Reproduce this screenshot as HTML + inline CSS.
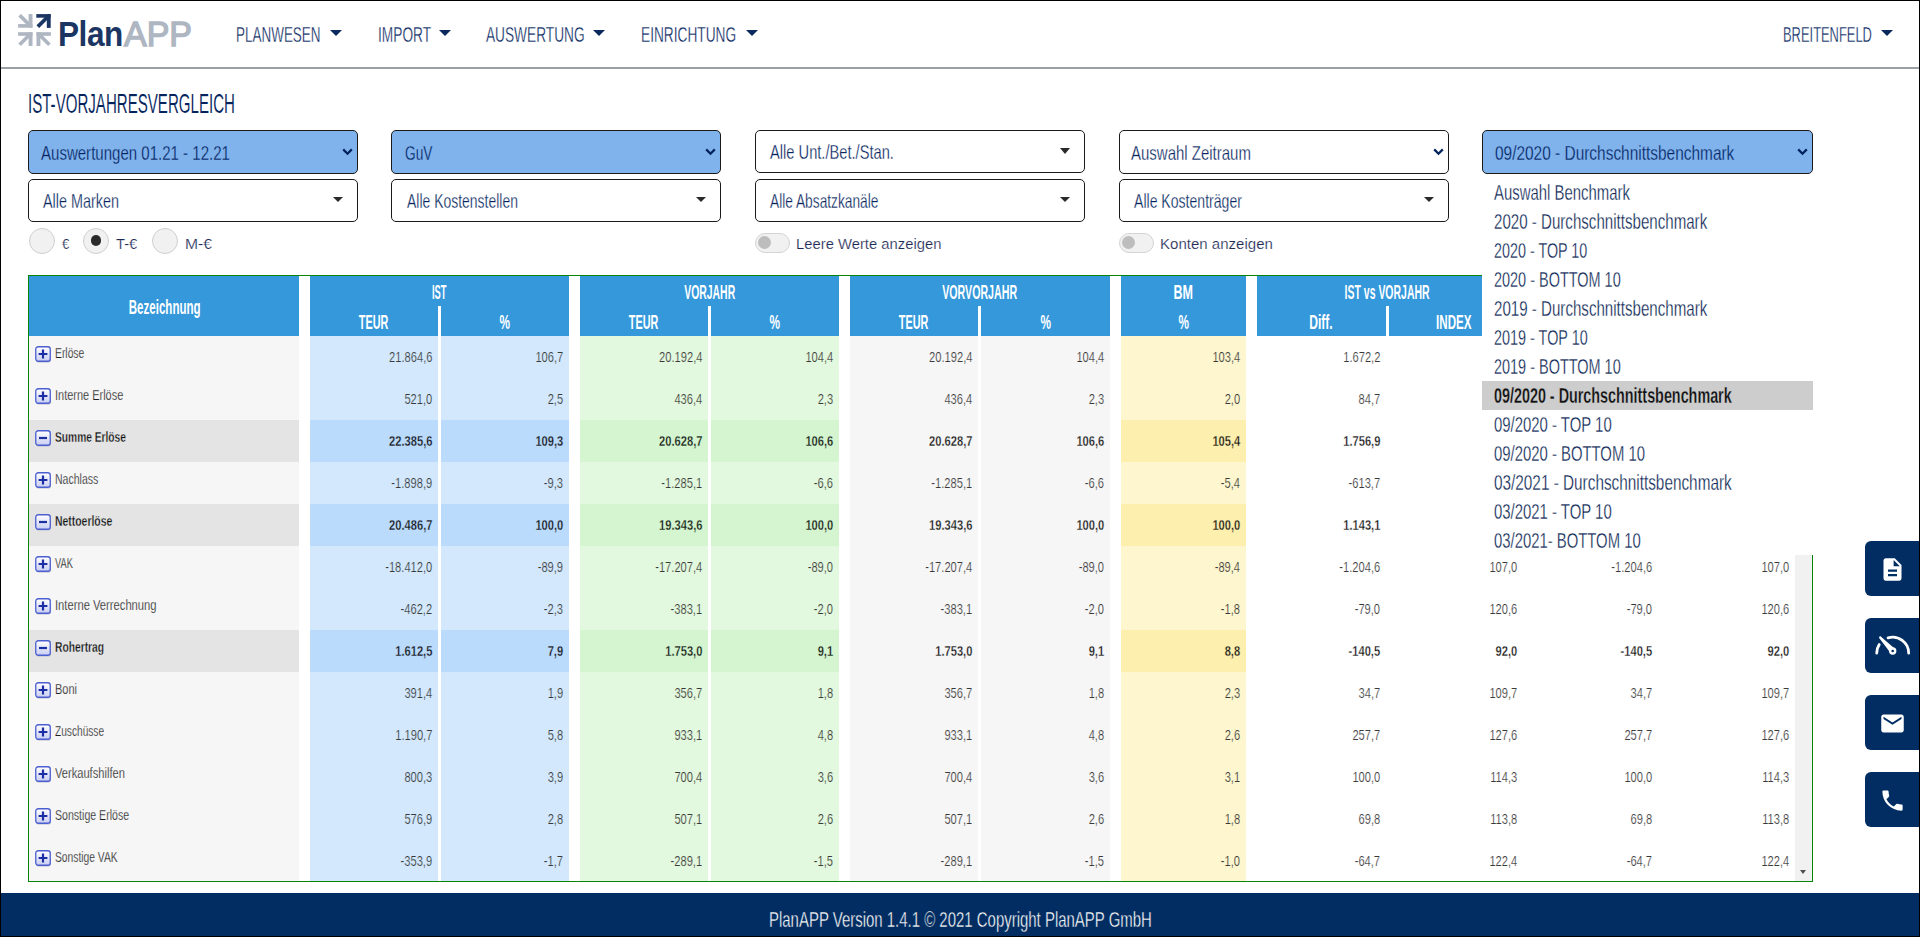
<!DOCTYPE html>
<html lang="de"><head><meta charset="utf-8"><title>PlanAPP - IST-Vorjahresvergleich</title>
<style>
html,body{margin:0;padding:0;background:#fff}
body{width:1920px;height:937px;position:relative;overflow:hidden;font-family:"Liberation Sans",sans-serif}
.b{position:absolute;box-sizing:content-box}
.t{position:absolute;white-space:nowrap;line-height:1;display:block}
</style></head><body>
<svg width="0" height="0" style="position:absolute"><defs><linearGradient id="g1" x1="0" y1="0" x2="0" y2="1">
<stop offset="0" stop-color="#ffffff"/><stop offset="1" stop-color="#c9cdf2"/></linearGradient></defs></svg>
<div class="b" style="left:0px;top:67px;width:1920px;height:2px;background:#9c9ea6;"></div>
<svg class="b" style="left:18px;top:14px" width="34" height="33" viewBox="0 0 34 33"><g fill="#aeb6c1" stroke="#aeb6c1"><g transform="translate(0.1,13.7) scale(1,-1)"><rect x="0" y="0" width="14.4" height="3.6" stroke="none"/><rect x="10.5" y="0" width="3.9" height="13.8" stroke="none"/><path d="M1.5 12.5 L12 2.1" stroke-width="3.7" fill="none"/></g><g transform="translate(0.1,18.2)"><rect x="0" y="0" width="14.4" height="3.6" stroke="none"/><rect x="10.5" y="0" width="3.9" height="13.8" stroke="none"/><path d="M1.5 12.5 L12 2.1" stroke-width="3.7" fill="none"/></g><g transform="translate(32.9,18.2) scale(-1,1)"><rect x="0" y="0" width="14.4" height="3.6" stroke="none"/><rect x="10.5" y="0" width="3.9" height="13.8" stroke="none"/><path d="M1.5 12.5 L12 2.1" stroke-width="3.7" fill="none"/></g></g><g transform="translate(18.3,0.1)" fill="#1c3664" stroke="#1c3664"><rect x="0" y="0" width="14.4" height="3.6" stroke="none"/><rect x="10.5" y="0" width="3.9" height="13.8" stroke="none"/><path d="M1.5 12.5 L12 2.1" stroke-width="3.7" fill="none"/></g></svg>
<span class="t" style="top:17.20px;font-size:35.8px;color:#1c3664;font-weight:700;letter-spacing:-0.5px;left:58.30px;transform-origin:0 0;transform:scaleX(0.8818);">Plan</span>
<span class="t" style="top:17.20px;font-size:35.8px;color:#aeb6c1;left:124.20px;transform-origin:0 0;transform:scaleX(0.9492);-webkit-text-stroke:1.4px #aeb6c1;">APP</span>
<span class="t" style="top:24.13px;font-size:21.7px;color:#03235c;left:236.00px;transform-origin:0 0;transform:scaleX(0.6209);-webkit-text-stroke:0.35px #fff;">PLANWESEN</span>
<div class="b" style="left:330.4px;top:29.8px;width:0;height:0;border-left:6.4px solid transparent;border-right:6.4px solid transparent;border-top:6.6px solid #0a2a5e"></div>
<span class="t" style="top:24.13px;font-size:21.7px;color:#03235c;left:377.50px;transform-origin:0 0;transform:scaleX(0.6322);-webkit-text-stroke:0.35px #fff;">IMPORT</span>
<div class="b" style="left:439px;top:29.8px;width:0;height:0;border-left:6.4px solid transparent;border-right:6.4px solid transparent;border-top:6.6px solid #0a2a5e"></div>
<span class="t" style="top:24.13px;font-size:21.7px;color:#03235c;left:486.00px;transform-origin:0 0;transform:scaleX(0.6307);-webkit-text-stroke:0.35px #fff;">AUSWERTUNG</span>
<div class="b" style="left:593.2px;top:29.8px;width:0;height:0;border-left:6.4px solid transparent;border-right:6.4px solid transparent;border-top:6.6px solid #0a2a5e"></div>
<span class="t" style="top:24.13px;font-size:21.7px;color:#03235c;left:641.00px;transform-origin:0 0;transform:scaleX(0.6317);-webkit-text-stroke:0.35px #fff;">EINRICHTUNG</span>
<div class="b" style="left:745.6px;top:29.8px;width:0;height:0;border-left:6.4px solid transparent;border-right:6.4px solid transparent;border-top:6.6px solid #0a2a5e"></div>
<span class="t" style="top:24.13px;font-size:21.7px;color:#03235c;left:1782.50px;transform-origin:0 0;transform:scaleX(0.5952);-webkit-text-stroke:0.35px #fff;">BREITENFELD</span>
<div class="b" style="left:1881.2px;top:29.8px;width:0;height:0;border-left:6.4px solid transparent;border-right:6.4px solid transparent;border-top:6.6px solid #0a2a5e"></div>
<span class="t" style="top:89.88px;font-size:27.2px;color:#03235c;left:28.00px;transform-origin:0 0;transform:scaleX(0.5545);-webkit-text-stroke:0.12px #fff;">IST-VORJAHRESVERGLEICH</span>
<div class="b" style="left:28px;top:130px;width:328px;height:42px;background:#80b3ec;border:1px solid #1a1a1a;border-radius:5px;"></div>
<span class="t" style="top:143.30px;font-size:20.2px;color:#03235c;left:40.50px;transform-origin:0 0;transform:scaleX(0.7447);-webkit-text-stroke:0.3px #80b3ec;">Auswertungen 01.21 - 12.21</span>
<svg class="b" style="left:341.5px;top:148px" width="11" height="8" viewBox="0 0 11 8"><path d="M1.2 1.4 L5.5 5.7 L9.8 1.4" fill="none" stroke="#03235c" stroke-width="2.3"/></svg>
<div class="b" style="left:391px;top:130px;width:328px;height:42px;background:#80b3ec;border:1px solid #1a1a1a;border-radius:5px;"></div>
<span class="t" style="top:143.30px;font-size:20.2px;color:#03235c;left:404.50px;transform-origin:0 0;transform:scaleX(0.6804);-webkit-text-stroke:0.3px #80b3ec;">GuV</span>
<svg class="b" style="left:704.5px;top:148px" width="11" height="8" viewBox="0 0 11 8"><path d="M1.2 1.4 L5.5 5.7 L9.8 1.4" fill="none" stroke="#03235c" stroke-width="2.3"/></svg>
<div class="b" style="left:755px;top:130px;width:328px;height:41px;background:#fff;border:1px solid #1a1a1a;border-radius:5px;"></div>
<span class="t" style="top:141.50px;font-size:20.2px;color:#03235c;left:770.00px;transform-origin:0 0;transform:scaleX(0.7266);-webkit-text-stroke:0.3px #fff;">Alle Unt./Bet./Stan.</span>
<div class="b" style="left:1059.5px;top:147.8px;width:0;height:0;border-left:5.9px solid transparent;border-right:5.9px solid transparent;border-top:6.3px solid #2a2a2a"></div>
<div class="b" style="left:1119px;top:130px;width:328px;height:42px;background:#fff;border:1px solid #1a1a1a;border-radius:5px;"></div>
<span class="t" style="top:143.30px;font-size:20.2px;color:#03235c;left:1131.00px;transform-origin:0 0;transform:scaleX(0.7423);-webkit-text-stroke:0.3px #fff;">Auswahl Zeitraum</span>
<svg class="b" style="left:1432.5px;top:148px" width="11" height="8" viewBox="0 0 11 8"><path d="M1.2 1.4 L5.5 5.7 L9.8 1.4" fill="none" stroke="#03235c" stroke-width="2.3"/></svg>
<div class="b" style="left:1482px;top:130px;width:329px;height:42px;background:#80b3ec;border:1px solid #1a1a1a;border-radius:5px;"></div>
<span class="t" style="top:143.30px;font-size:20.2px;color:#03235c;left:1495.00px;transform-origin:0 0;transform:scaleX(0.7645);-webkit-text-stroke:0.3px #80b3ec;">09/2020 - Durchschnittsbenchmark</span>
<svg class="b" style="left:1796.5px;top:148px" width="11" height="8" viewBox="0 0 11 8"><path d="M1.2 1.4 L5.5 5.7 L9.8 1.4" fill="none" stroke="#03235c" stroke-width="2.3"/></svg>
<div class="b" style="left:28px;top:179px;width:328px;height:41px;background:#fff;border:1px solid #1a1a1a;border-radius:5px;"></div>
<span class="t" style="top:191.10px;font-size:20.2px;color:#03235c;left:42.50px;transform-origin:0 0;transform:scaleX(0.7126);-webkit-text-stroke:0.3px #fff;">Alle Marken</span>
<div class="b" style="left:333px;top:197px;width:0;height:0;border-left:5.9px solid transparent;border-right:5.9px solid transparent;border-top:5.7px solid #2a2a2a"></div>
<div class="b" style="left:391px;top:179px;width:328px;height:41px;background:#fff;border:1px solid #1a1a1a;border-radius:5px;"></div>
<span class="t" style="top:191.10px;font-size:20.2px;color:#03235c;left:406.50px;transform-origin:0 0;transform:scaleX(0.6913);-webkit-text-stroke:0.3px #fff;">Alle Kostenstellen</span>
<div class="b" style="left:696px;top:197px;width:0;height:0;border-left:5.9px solid transparent;border-right:5.9px solid transparent;border-top:5.7px solid #2a2a2a"></div>
<div class="b" style="left:755px;top:179px;width:328px;height:41px;background:#fff;border:1px solid #1a1a1a;border-radius:5px;"></div>
<span class="t" style="top:191.10px;font-size:20.2px;color:#03235c;left:770.00px;transform-origin:0 0;transform:scaleX(0.6804);-webkit-text-stroke:0.3px #fff;">Alle Absatzkanäle</span>
<div class="b" style="left:1060px;top:197px;width:0;height:0;border-left:5.9px solid transparent;border-right:5.9px solid transparent;border-top:5.7px solid #2a2a2a"></div>
<div class="b" style="left:1119px;top:179px;width:328px;height:41px;background:#fff;border:1px solid #1a1a1a;border-radius:5px;"></div>
<span class="t" style="top:191.10px;font-size:20.2px;color:#03235c;left:1133.50px;transform-origin:0 0;transform:scaleX(0.6970);-webkit-text-stroke:0.3px #fff;">Alle Kostenträger</span>
<div class="b" style="left:1424px;top:197px;width:0;height:0;border-left:5.9px solid transparent;border-right:5.9px solid transparent;border-top:5.7px solid #2a2a2a"></div>
<div class="b" style="left:29px;top:228px;width:24px;height:24px;background:#f1f1f1;border:1px solid #cfcfcf;border-radius:50%;"></div>
<div class="b" style="left:83px;top:228px;width:24px;height:24px;background:#f1f1f1;border:1px solid #cfcfcf;border-radius:50%;"></div>
<div class="b" style="left:152px;top:228px;width:24px;height:24px;background:#f1f1f1;border:1px solid #cfcfcf;border-radius:50%;"></div>
<div class="b" style="left:90.7px;top:235.4px;width:10.6px;height:10.6px;background:#2b2b2b;border-radius:50%;"></div>
<span class="t" style="top:235.93px;font-size:15.2px;color:#1d2a55;left:61.50px;transform-origin:0 0;transform:scaleX(0.8635);-webkit-text-stroke:0.2px #fff;">€</span>
<span class="t" style="top:235.93px;font-size:15.2px;color:#1d2a55;left:115.60px;transform-origin:0 0;transform:scaleX(0.9699);-webkit-text-stroke:0.2px #fff;">T-€</span>
<span class="t" style="top:235.93px;font-size:15.2px;color:#1d2a55;left:184.80px;transform-origin:0 0;transform:scaleX(1.0314);-webkit-text-stroke:0.2px #fff;">M-€</span>
<div class="b" style="left:755px;top:233px;width:33px;height:18px;background:#f1f1f1;border:1px solid #d4d4d4;border-radius:10px;"></div>
<div class="b" style="left:758px;top:236px;width:13px;height:13px;background:#bdbdbd;border-radius:50%;"></div>
<span class="t" style="top:235.83px;font-size:15.2px;color:#1d2a55;left:796.00px;transform-origin:0 0;transform:scaleX(0.9746);-webkit-text-stroke:0.2px #fff;">Leere Werte anzeigen</span>
<div class="b" style="left:1119px;top:233px;width:33px;height:18px;background:#f1f1f1;border:1px solid #d4d4d4;border-radius:10px;"></div>
<div class="b" style="left:1122px;top:236px;width:13px;height:13px;background:#bdbdbd;border-radius:50%;"></div>
<span class="t" style="top:235.83px;font-size:15.2px;color:#1d2a55;left:1159.50px;transform-origin:0 0;transform:scaleX(0.9904);-webkit-text-stroke:0.2px #fff;">Konten anzeigen</span>
<div class="b" style="left:28px;top:275px;width:1783px;height:605px;border:1px solid #078407;"></div>
<div class="b" style="left:29px;top:276px;width:270px;height:60px;background:#3498db;"></div>
<span class="t" style="top:298.29px;font-size:19.5px;color:#fff;font-weight:700;left:103.63px;transform-origin:50% 0;transform:scaleX(0.5917);">Bezeichnung</span>
<div class="b" style="left:29px;top:336px;width:270px;height:545px;background:#f6f6f6;"></div>
<div class="b" style="left:29px;top:420px;width:270px;height:42px;background:#e4e4e4;"></div>
<div class="b" style="left:29px;top:504px;width:270px;height:42px;background:#e4e4e4;"></div>
<div class="b" style="left:29px;top:630px;width:270px;height:42px;background:#e4e4e4;"></div>
<div class="b" style="left:310px;top:276px;width:128px;height:60px;background:#3498db;"></div>
<div class="b" style="left:441px;top:276px;width:128px;height:60px;background:#3498db;"></div>
<div class="b" style="left:438px;top:276px;width:3px;height:30px;background:#3498db;"></div>
<div class="b" style="left:310px;top:336px;width:128px;height:545px;background:#d3e8fd;"></div>
<div class="b" style="left:310px;top:420px;width:128px;height:42px;background:#badbfc;"></div>
<div class="b" style="left:310px;top:504px;width:128px;height:42px;background:#badbfc;"></div>
<div class="b" style="left:310px;top:630px;width:128px;height:42px;background:#badbfc;"></div>
<div class="b" style="left:441px;top:336px;width:128px;height:545px;background:#d3e8fd;"></div>
<div class="b" style="left:441px;top:420px;width:128px;height:42px;background:#badbfc;"></div>
<div class="b" style="left:441px;top:504px;width:128px;height:42px;background:#badbfc;"></div>
<div class="b" style="left:441px;top:630px;width:128px;height:42px;background:#badbfc;"></div>
<span class="t" style="top:283.09px;font-size:19.5px;color:#fff;font-weight:700;left:424.33px;transform-origin:50% 0;transform:scaleX(0.4780);">IST</span>
<span class="t" style="top:312.99px;font-size:19.5px;color:#fff;font-weight:700;left:347.46px;transform-origin:50% 0;transform:scaleX(0.5557);">TEUR</span>
<span class="t" style="top:312.99px;font-size:19.5px;color:#fff;font-weight:700;left:496.33px;transform-origin:50% 0;transform:scaleX(0.6056);">%</span>
<div class="b" style="left:580px;top:276px;width:128px;height:60px;background:#3498db;"></div>
<div class="b" style="left:711px;top:276px;width:128px;height:60px;background:#3498db;"></div>
<div class="b" style="left:708px;top:276px;width:3px;height:30px;background:#3498db;"></div>
<div class="b" style="left:580px;top:336px;width:128px;height:545px;background:#e2f9df;"></div>
<div class="b" style="left:580px;top:420px;width:128px;height:42px;background:#d4f5d0;"></div>
<div class="b" style="left:580px;top:504px;width:128px;height:42px;background:#d4f5d0;"></div>
<div class="b" style="left:580px;top:630px;width:128px;height:42px;background:#d4f5d0;"></div>
<div class="b" style="left:711px;top:336px;width:128px;height:545px;background:#e2f9df;"></div>
<div class="b" style="left:711px;top:420px;width:128px;height:42px;background:#d4f5d0;"></div>
<div class="b" style="left:711px;top:504px;width:128px;height:42px;background:#d4f5d0;"></div>
<div class="b" style="left:711px;top:630px;width:128px;height:42px;background:#d4f5d0;"></div>
<span class="t" style="top:283.09px;font-size:19.5px;color:#fff;font-weight:700;left:661.83px;transform-origin:50% 0;transform:scaleX(0.5349);">VORJAHR</span>
<span class="t" style="top:312.99px;font-size:19.5px;color:#fff;font-weight:700;left:617.46px;transform-origin:50% 0;transform:scaleX(0.5557);">TEUR</span>
<span class="t" style="top:312.99px;font-size:19.5px;color:#fff;font-weight:700;left:766.33px;transform-origin:50% 0;transform:scaleX(0.6056);">%</span>
<div class="b" style="left:850px;top:276px;width:128px;height:60px;background:#3498db;"></div>
<div class="b" style="left:981px;top:276px;width:129px;height:60px;background:#3498db;"></div>
<div class="b" style="left:978px;top:276px;width:3px;height:30px;background:#3498db;"></div>
<div class="b" style="left:850px;top:336px;width:128px;height:545px;background:#f6f6f6;"></div>
<div class="b" style="left:981px;top:336px;width:129px;height:545px;background:#f6f6f6;"></div>
<span class="t" style="top:283.09px;font-size:19.5px;color:#fff;font-weight:700;left:911.37px;transform-origin:50% 0;transform:scaleX(0.5464);">VORVORJAHR</span>
<span class="t" style="top:312.99px;font-size:19.5px;color:#fff;font-weight:700;left:887.46px;transform-origin:50% 0;transform:scaleX(0.5557);">TEUR</span>
<span class="t" style="top:312.99px;font-size:19.5px;color:#fff;font-weight:700;left:1036.83px;transform-origin:50% 0;transform:scaleX(0.6056);">%</span>
<div class="b" style="left:1121px;top:276px;width:125px;height:60px;background:#3498db;"></div>
<div class="b" style="left:1121px;top:336px;width:125px;height:545px;background:#fdf6cf;"></div>
<div class="b" style="left:1121px;top:420px;width:125px;height:42px;background:#fdefae;"></div>
<div class="b" style="left:1121px;top:504px;width:125px;height:42px;background:#fdefae;"></div>
<div class="b" style="left:1121px;top:630px;width:125px;height:42px;background:#fdefae;"></div>
<span class="t" style="top:283.09px;font-size:19.5px;color:#fff;font-weight:700;left:1168.34px;transform-origin:50% 0;transform:scaleX(0.6430);">BM</span>
<span class="t" style="top:312.99px;font-size:19.5px;color:#fff;font-weight:700;left:1174.83px;transform-origin:50% 0;transform:scaleX(0.6056);">%</span>
<div class="b" style="left:1257px;top:276px;width:129px;height:60px;background:#3498db;"></div>
<div class="b" style="left:1389px;top:276px;width:93px;height:60px;background:#3498db;"></div>
<div class="b" style="left:1386px;top:276px;width:3px;height:30px;background:#3498db;"></div>
<span class="t" style="top:283.09px;font-size:19.5px;color:#fff;font-weight:700;left:1308.40px;transform-origin:50% 0;transform:scaleX(0.5373);">IST vs VORJAHR</span>
<span class="t" style="top:312.99px;font-size:19.5px;color:#fff;font-weight:700;left:1302.05px;transform-origin:50% 0;transform:scaleX(0.6200);">Diff.</span>
<span class="t" style="top:312.99px;font-size:19.5px;color:#fff;font-weight:700;left:1423.70px;transform-origin:50% 0;transform:scaleX(0.5957);">INDEX</span>
<svg class="b" style="left:35px;top:346px" width="17" height="17" viewBox="0 0 17 17"><rect x="1" y="1.6" width="15" height="15" rx="2.5" fill="#b9b9c9"/><rect x="0.75" y="0.75" width="14.5" height="14.5" rx="2.5" fill="url(#g1)" stroke="#4c5fd0" stroke-width="1.3"/><path d="M3.6 8h8.8M8 3.6v8.8" stroke="#1b2ea6" stroke-width="2.2"/></svg>
<span class="t" style="top:344.96px;font-size:15.4px;color:#1c1c1c;left:55.00px;transform-origin:0 0;transform:scaleX(0.6712);-webkit-text-stroke:0.25px #f6f6f6;">Erlöse</span>
<span class="t" style="top:349.53px;font-size:14.5px;color:#383838;right:1488.00px;transform-origin:100% 0;transform:scaleX(0.7680);-webkit-text-stroke:0.2px #d3e8fd;">21.864,6</span>
<span class="t" style="top:349.53px;font-size:14.5px;color:#383838;right:1356.70px;transform-origin:100% 0;transform:scaleX(0.7680);-webkit-text-stroke:0.2px #d3e8fd;">106,7</span>
<span class="t" style="top:349.53px;font-size:14.5px;color:#383838;right:1217.70px;transform-origin:100% 0;transform:scaleX(0.7680);-webkit-text-stroke:0.2px #e2f9df;">20.192,4</span>
<span class="t" style="top:349.53px;font-size:14.5px;color:#383838;right:1086.70px;transform-origin:100% 0;transform:scaleX(0.7680);-webkit-text-stroke:0.2px #e2f9df;">104,4</span>
<span class="t" style="top:349.53px;font-size:14.5px;color:#383838;right:947.70px;transform-origin:100% 0;transform:scaleX(0.7680);-webkit-text-stroke:0.2px #f6f6f6;">20.192,4</span>
<span class="t" style="top:349.53px;font-size:14.5px;color:#383838;right:815.70px;transform-origin:100% 0;transform:scaleX(0.7680);-webkit-text-stroke:0.2px #f6f6f6;">104,4</span>
<span class="t" style="top:349.53px;font-size:14.5px;color:#383838;right:680.00px;transform-origin:100% 0;transform:scaleX(0.7680);-webkit-text-stroke:0.2px #fdf6cf;">103,4</span>
<span class="t" style="top:349.53px;font-size:14.5px;color:#383838;right:540.00px;transform-origin:100% 0;transform:scaleX(0.7680);-webkit-text-stroke:0.2px #fff;">1.672,2</span>
<svg class="b" style="left:35px;top:388px" width="17" height="17" viewBox="0 0 17 17"><rect x="1" y="1.6" width="15" height="15" rx="2.5" fill="#b9b9c9"/><rect x="0.75" y="0.75" width="14.5" height="14.5" rx="2.5" fill="url(#g1)" stroke="#4c5fd0" stroke-width="1.3"/><path d="M3.6 8h8.8M8 3.6v8.8" stroke="#1b2ea6" stroke-width="2.2"/></svg>
<span class="t" style="top:386.96px;font-size:15.4px;color:#1c1c1c;left:55.00px;transform-origin:0 0;transform:scaleX(0.7124);-webkit-text-stroke:0.25px #f6f6f6;">Interne Erlöse</span>
<span class="t" style="top:391.53px;font-size:14.5px;color:#383838;right:1488.00px;transform-origin:100% 0;transform:scaleX(0.7680);-webkit-text-stroke:0.2px #d3e8fd;">521,0</span>
<span class="t" style="top:391.53px;font-size:14.5px;color:#383838;right:1356.70px;transform-origin:100% 0;transform:scaleX(0.7680);-webkit-text-stroke:0.2px #d3e8fd;">2,5</span>
<span class="t" style="top:391.53px;font-size:14.5px;color:#383838;right:1217.70px;transform-origin:100% 0;transform:scaleX(0.7680);-webkit-text-stroke:0.2px #e2f9df;">436,4</span>
<span class="t" style="top:391.53px;font-size:14.5px;color:#383838;right:1086.70px;transform-origin:100% 0;transform:scaleX(0.7680);-webkit-text-stroke:0.2px #e2f9df;">2,3</span>
<span class="t" style="top:391.53px;font-size:14.5px;color:#383838;right:947.70px;transform-origin:100% 0;transform:scaleX(0.7680);-webkit-text-stroke:0.2px #f6f6f6;">436,4</span>
<span class="t" style="top:391.53px;font-size:14.5px;color:#383838;right:815.70px;transform-origin:100% 0;transform:scaleX(0.7680);-webkit-text-stroke:0.2px #f6f6f6;">2,3</span>
<span class="t" style="top:391.53px;font-size:14.5px;color:#383838;right:680.00px;transform-origin:100% 0;transform:scaleX(0.7680);-webkit-text-stroke:0.2px #fdf6cf;">2,0</span>
<span class="t" style="top:391.53px;font-size:14.5px;color:#383838;right:540.00px;transform-origin:100% 0;transform:scaleX(0.7680);-webkit-text-stroke:0.2px #fff;">84,7</span>
<svg class="b" style="left:35px;top:430px" width="17" height="17" viewBox="0 0 17 17"><rect x="1" y="1.6" width="15" height="15" rx="2.5" fill="#b9b9c9"/><rect x="0.75" y="0.75" width="14.5" height="14.5" rx="2.5" fill="url(#g1)" stroke="#4c5fd0" stroke-width="1.3"/><path d="M4 8h8" stroke="#1b2ea6" stroke-width="2.2"/></svg>
<span class="t" style="top:428.96px;font-size:15.4px;color:#111;font-weight:700;left:55.00px;transform-origin:0 0;transform:scaleX(0.6636);-webkit-text-stroke:0.3px #e4e4e4;">Summe Erlöse</span>
<span class="t" style="top:433.53px;font-size:14.5px;color:#151515;font-weight:700;right:1488.00px;transform-origin:100% 0;transform:scaleX(0.7680);-webkit-text-stroke:0.3px #badbfc;">22.385,6</span>
<span class="t" style="top:433.53px;font-size:14.5px;color:#151515;font-weight:700;right:1356.70px;transform-origin:100% 0;transform:scaleX(0.7680);-webkit-text-stroke:0.3px #badbfc;">109,3</span>
<span class="t" style="top:433.53px;font-size:14.5px;color:#151515;font-weight:700;right:1217.70px;transform-origin:100% 0;transform:scaleX(0.7680);-webkit-text-stroke:0.3px #d4f5d0;">20.628,7</span>
<span class="t" style="top:433.53px;font-size:14.5px;color:#151515;font-weight:700;right:1086.70px;transform-origin:100% 0;transform:scaleX(0.7680);-webkit-text-stroke:0.3px #d4f5d0;">106,6</span>
<span class="t" style="top:433.53px;font-size:14.5px;color:#151515;font-weight:700;right:947.70px;transform-origin:100% 0;transform:scaleX(0.7680);-webkit-text-stroke:0.3px #f6f6f6;">20.628,7</span>
<span class="t" style="top:433.53px;font-size:14.5px;color:#151515;font-weight:700;right:815.70px;transform-origin:100% 0;transform:scaleX(0.7680);-webkit-text-stroke:0.3px #f6f6f6;">106,6</span>
<span class="t" style="top:433.53px;font-size:14.5px;color:#151515;font-weight:700;right:680.00px;transform-origin:100% 0;transform:scaleX(0.7680);-webkit-text-stroke:0.3px #fdefae;">105,4</span>
<span class="t" style="top:433.53px;font-size:14.5px;color:#151515;font-weight:700;right:540.00px;transform-origin:100% 0;transform:scaleX(0.7680);-webkit-text-stroke:0.3px #fff;">1.756,9</span>
<svg class="b" style="left:35px;top:472px" width="17" height="17" viewBox="0 0 17 17"><rect x="1" y="1.6" width="15" height="15" rx="2.5" fill="#b9b9c9"/><rect x="0.75" y="0.75" width="14.5" height="14.5" rx="2.5" fill="url(#g1)" stroke="#4c5fd0" stroke-width="1.3"/><path d="M3.6 8h8.8M8 3.6v8.8" stroke="#1b2ea6" stroke-width="2.2"/></svg>
<span class="t" style="top:470.96px;font-size:15.4px;color:#1c1c1c;left:55.00px;transform-origin:0 0;transform:scaleX(0.6836);-webkit-text-stroke:0.25px #f6f6f6;">Nachlass</span>
<span class="t" style="top:475.53px;font-size:14.5px;color:#383838;right:1488.00px;transform-origin:100% 0;transform:scaleX(0.7680);-webkit-text-stroke:0.2px #d3e8fd;">-1.898,9</span>
<span class="t" style="top:475.53px;font-size:14.5px;color:#383838;right:1356.70px;transform-origin:100% 0;transform:scaleX(0.7680);-webkit-text-stroke:0.2px #d3e8fd;">-9,3</span>
<span class="t" style="top:475.53px;font-size:14.5px;color:#383838;right:1217.70px;transform-origin:100% 0;transform:scaleX(0.7680);-webkit-text-stroke:0.2px #e2f9df;">-1.285,1</span>
<span class="t" style="top:475.53px;font-size:14.5px;color:#383838;right:1086.70px;transform-origin:100% 0;transform:scaleX(0.7680);-webkit-text-stroke:0.2px #e2f9df;">-6,6</span>
<span class="t" style="top:475.53px;font-size:14.5px;color:#383838;right:947.70px;transform-origin:100% 0;transform:scaleX(0.7680);-webkit-text-stroke:0.2px #f6f6f6;">-1.285,1</span>
<span class="t" style="top:475.53px;font-size:14.5px;color:#383838;right:815.70px;transform-origin:100% 0;transform:scaleX(0.7680);-webkit-text-stroke:0.2px #f6f6f6;">-6,6</span>
<span class="t" style="top:475.53px;font-size:14.5px;color:#383838;right:680.00px;transform-origin:100% 0;transform:scaleX(0.7680);-webkit-text-stroke:0.2px #fdf6cf;">-5,4</span>
<span class="t" style="top:475.53px;font-size:14.5px;color:#383838;right:540.00px;transform-origin:100% 0;transform:scaleX(0.7680);-webkit-text-stroke:0.2px #fff;">-613,7</span>
<svg class="b" style="left:35px;top:514px" width="17" height="17" viewBox="0 0 17 17"><rect x="1" y="1.6" width="15" height="15" rx="2.5" fill="#b9b9c9"/><rect x="0.75" y="0.75" width="14.5" height="14.5" rx="2.5" fill="url(#g1)" stroke="#4c5fd0" stroke-width="1.3"/><path d="M4 8h8" stroke="#1b2ea6" stroke-width="2.2"/></svg>
<span class="t" style="top:512.96px;font-size:15.4px;color:#111;font-weight:700;left:55.00px;transform-origin:0 0;transform:scaleX(0.6763);-webkit-text-stroke:0.3px #e4e4e4;">Nettoerlöse</span>
<span class="t" style="top:517.53px;font-size:14.5px;color:#151515;font-weight:700;right:1488.00px;transform-origin:100% 0;transform:scaleX(0.7680);-webkit-text-stroke:0.3px #badbfc;">20.486,7</span>
<span class="t" style="top:517.53px;font-size:14.5px;color:#151515;font-weight:700;right:1356.70px;transform-origin:100% 0;transform:scaleX(0.7680);-webkit-text-stroke:0.3px #badbfc;">100,0</span>
<span class="t" style="top:517.53px;font-size:14.5px;color:#151515;font-weight:700;right:1217.70px;transform-origin:100% 0;transform:scaleX(0.7680);-webkit-text-stroke:0.3px #d4f5d0;">19.343,6</span>
<span class="t" style="top:517.53px;font-size:14.5px;color:#151515;font-weight:700;right:1086.70px;transform-origin:100% 0;transform:scaleX(0.7680);-webkit-text-stroke:0.3px #d4f5d0;">100,0</span>
<span class="t" style="top:517.53px;font-size:14.5px;color:#151515;font-weight:700;right:947.70px;transform-origin:100% 0;transform:scaleX(0.7680);-webkit-text-stroke:0.3px #f6f6f6;">19.343,6</span>
<span class="t" style="top:517.53px;font-size:14.5px;color:#151515;font-weight:700;right:815.70px;transform-origin:100% 0;transform:scaleX(0.7680);-webkit-text-stroke:0.3px #f6f6f6;">100,0</span>
<span class="t" style="top:517.53px;font-size:14.5px;color:#151515;font-weight:700;right:680.00px;transform-origin:100% 0;transform:scaleX(0.7680);-webkit-text-stroke:0.3px #fdefae;">100,0</span>
<span class="t" style="top:517.53px;font-size:14.5px;color:#151515;font-weight:700;right:540.00px;transform-origin:100% 0;transform:scaleX(0.7680);-webkit-text-stroke:0.3px #fff;">1.143,1</span>
<svg class="b" style="left:35px;top:556px" width="17" height="17" viewBox="0 0 17 17"><rect x="1" y="1.6" width="15" height="15" rx="2.5" fill="#b9b9c9"/><rect x="0.75" y="0.75" width="14.5" height="14.5" rx="2.5" fill="url(#g1)" stroke="#4c5fd0" stroke-width="1.3"/><path d="M3.6 8h8.8M8 3.6v8.8" stroke="#1b2ea6" stroke-width="2.2"/></svg>
<span class="t" style="top:554.96px;font-size:15.4px;color:#1c1c1c;left:55.00px;transform-origin:0 0;transform:scaleX(0.5999);-webkit-text-stroke:0.25px #f6f6f6;">VAK</span>
<span class="t" style="top:559.53px;font-size:14.5px;color:#383838;right:1488.00px;transform-origin:100% 0;transform:scaleX(0.7680);-webkit-text-stroke:0.2px #d3e8fd;">-18.412,0</span>
<span class="t" style="top:559.53px;font-size:14.5px;color:#383838;right:1356.70px;transform-origin:100% 0;transform:scaleX(0.7680);-webkit-text-stroke:0.2px #d3e8fd;">-89,9</span>
<span class="t" style="top:559.53px;font-size:14.5px;color:#383838;right:1217.70px;transform-origin:100% 0;transform:scaleX(0.7680);-webkit-text-stroke:0.2px #e2f9df;">-17.207,4</span>
<span class="t" style="top:559.53px;font-size:14.5px;color:#383838;right:1086.70px;transform-origin:100% 0;transform:scaleX(0.7680);-webkit-text-stroke:0.2px #e2f9df;">-89,0</span>
<span class="t" style="top:559.53px;font-size:14.5px;color:#383838;right:947.70px;transform-origin:100% 0;transform:scaleX(0.7680);-webkit-text-stroke:0.2px #f6f6f6;">-17.207,4</span>
<span class="t" style="top:559.53px;font-size:14.5px;color:#383838;right:815.70px;transform-origin:100% 0;transform:scaleX(0.7680);-webkit-text-stroke:0.2px #f6f6f6;">-89,0</span>
<span class="t" style="top:559.53px;font-size:14.5px;color:#383838;right:680.00px;transform-origin:100% 0;transform:scaleX(0.7680);-webkit-text-stroke:0.2px #fdf6cf;">-89,4</span>
<span class="t" style="top:559.53px;font-size:14.5px;color:#383838;right:540.00px;transform-origin:100% 0;transform:scaleX(0.7680);-webkit-text-stroke:0.2px #fff;">-1.204,6</span>
<span class="t" style="top:559.53px;font-size:14.5px;color:#383838;right:402.70px;transform-origin:100% 0;transform:scaleX(0.7680);-webkit-text-stroke:0.2px #fff;">107,0</span>
<span class="t" style="top:559.53px;font-size:14.5px;color:#383838;right:267.60px;transform-origin:100% 0;transform:scaleX(0.7680);-webkit-text-stroke:0.2px #fff;">-1.204,6</span>
<span class="t" style="top:559.53px;font-size:14.5px;color:#383838;right:130.60px;transform-origin:100% 0;transform:scaleX(0.7680);-webkit-text-stroke:0.2px #fff;">107,0</span>
<svg class="b" style="left:35px;top:598px" width="17" height="17" viewBox="0 0 17 17"><rect x="1" y="1.6" width="15" height="15" rx="2.5" fill="#b9b9c9"/><rect x="0.75" y="0.75" width="14.5" height="14.5" rx="2.5" fill="url(#g1)" stroke="#4c5fd0" stroke-width="1.3"/><path d="M3.6 8h8.8M8 3.6v8.8" stroke="#1b2ea6" stroke-width="2.2"/></svg>
<span class="t" style="top:596.96px;font-size:15.4px;color:#1c1c1c;left:55.00px;transform-origin:0 0;transform:scaleX(0.7280);-webkit-text-stroke:0.25px #f6f6f6;">Interne Verrechnung</span>
<span class="t" style="top:601.53px;font-size:14.5px;color:#383838;right:1488.00px;transform-origin:100% 0;transform:scaleX(0.7680);-webkit-text-stroke:0.2px #d3e8fd;">-462,2</span>
<span class="t" style="top:601.53px;font-size:14.5px;color:#383838;right:1356.70px;transform-origin:100% 0;transform:scaleX(0.7680);-webkit-text-stroke:0.2px #d3e8fd;">-2,3</span>
<span class="t" style="top:601.53px;font-size:14.5px;color:#383838;right:1217.70px;transform-origin:100% 0;transform:scaleX(0.7680);-webkit-text-stroke:0.2px #e2f9df;">-383,1</span>
<span class="t" style="top:601.53px;font-size:14.5px;color:#383838;right:1086.70px;transform-origin:100% 0;transform:scaleX(0.7680);-webkit-text-stroke:0.2px #e2f9df;">-2,0</span>
<span class="t" style="top:601.53px;font-size:14.5px;color:#383838;right:947.70px;transform-origin:100% 0;transform:scaleX(0.7680);-webkit-text-stroke:0.2px #f6f6f6;">-383,1</span>
<span class="t" style="top:601.53px;font-size:14.5px;color:#383838;right:815.70px;transform-origin:100% 0;transform:scaleX(0.7680);-webkit-text-stroke:0.2px #f6f6f6;">-2,0</span>
<span class="t" style="top:601.53px;font-size:14.5px;color:#383838;right:680.00px;transform-origin:100% 0;transform:scaleX(0.7680);-webkit-text-stroke:0.2px #fdf6cf;">-1,8</span>
<span class="t" style="top:601.53px;font-size:14.5px;color:#383838;right:540.00px;transform-origin:100% 0;transform:scaleX(0.7680);-webkit-text-stroke:0.2px #fff;">-79,0</span>
<span class="t" style="top:601.53px;font-size:14.5px;color:#383838;right:402.70px;transform-origin:100% 0;transform:scaleX(0.7680);-webkit-text-stroke:0.2px #fff;">120,6</span>
<span class="t" style="top:601.53px;font-size:14.5px;color:#383838;right:267.60px;transform-origin:100% 0;transform:scaleX(0.7680);-webkit-text-stroke:0.2px #fff;">-79,0</span>
<span class="t" style="top:601.53px;font-size:14.5px;color:#383838;right:130.60px;transform-origin:100% 0;transform:scaleX(0.7680);-webkit-text-stroke:0.2px #fff;">120,6</span>
<svg class="b" style="left:35px;top:640px" width="17" height="17" viewBox="0 0 17 17"><rect x="1" y="1.6" width="15" height="15" rx="2.5" fill="#b9b9c9"/><rect x="0.75" y="0.75" width="14.5" height="14.5" rx="2.5" fill="url(#g1)" stroke="#4c5fd0" stroke-width="1.3"/><path d="M4 8h8" stroke="#1b2ea6" stroke-width="2.2"/></svg>
<span class="t" style="top:638.96px;font-size:15.4px;color:#111;font-weight:700;left:55.00px;transform-origin:0 0;transform:scaleX(0.6672);-webkit-text-stroke:0.3px #e4e4e4;">Rohertrag</span>
<span class="t" style="top:643.53px;font-size:14.5px;color:#151515;font-weight:700;right:1488.00px;transform-origin:100% 0;transform:scaleX(0.7680);-webkit-text-stroke:0.3px #badbfc;">1.612,5</span>
<span class="t" style="top:643.53px;font-size:14.5px;color:#151515;font-weight:700;right:1356.70px;transform-origin:100% 0;transform:scaleX(0.7680);-webkit-text-stroke:0.3px #badbfc;">7,9</span>
<span class="t" style="top:643.53px;font-size:14.5px;color:#151515;font-weight:700;right:1217.70px;transform-origin:100% 0;transform:scaleX(0.7680);-webkit-text-stroke:0.3px #d4f5d0;">1.753,0</span>
<span class="t" style="top:643.53px;font-size:14.5px;color:#151515;font-weight:700;right:1086.70px;transform-origin:100% 0;transform:scaleX(0.7680);-webkit-text-stroke:0.3px #d4f5d0;">9,1</span>
<span class="t" style="top:643.53px;font-size:14.5px;color:#151515;font-weight:700;right:947.70px;transform-origin:100% 0;transform:scaleX(0.7680);-webkit-text-stroke:0.3px #f6f6f6;">1.753,0</span>
<span class="t" style="top:643.53px;font-size:14.5px;color:#151515;font-weight:700;right:815.70px;transform-origin:100% 0;transform:scaleX(0.7680);-webkit-text-stroke:0.3px #f6f6f6;">9,1</span>
<span class="t" style="top:643.53px;font-size:14.5px;color:#151515;font-weight:700;right:680.00px;transform-origin:100% 0;transform:scaleX(0.7680);-webkit-text-stroke:0.3px #fdefae;">8,8</span>
<span class="t" style="top:643.53px;font-size:14.5px;color:#151515;font-weight:700;right:540.00px;transform-origin:100% 0;transform:scaleX(0.7680);-webkit-text-stroke:0.3px #fff;">-140,5</span>
<span class="t" style="top:643.53px;font-size:14.5px;color:#151515;font-weight:700;right:402.70px;transform-origin:100% 0;transform:scaleX(0.7680);-webkit-text-stroke:0.3px #fff;">92,0</span>
<span class="t" style="top:643.53px;font-size:14.5px;color:#151515;font-weight:700;right:267.60px;transform-origin:100% 0;transform:scaleX(0.7680);-webkit-text-stroke:0.3px #fff;">-140,5</span>
<span class="t" style="top:643.53px;font-size:14.5px;color:#151515;font-weight:700;right:130.60px;transform-origin:100% 0;transform:scaleX(0.7680);-webkit-text-stroke:0.3px #fff;">92,0</span>
<svg class="b" style="left:35px;top:682px" width="17" height="17" viewBox="0 0 17 17"><rect x="1" y="1.6" width="15" height="15" rx="2.5" fill="#b9b9c9"/><rect x="0.75" y="0.75" width="14.5" height="14.5" rx="2.5" fill="url(#g1)" stroke="#4c5fd0" stroke-width="1.3"/><path d="M3.6 8h8.8M8 3.6v8.8" stroke="#1b2ea6" stroke-width="2.2"/></svg>
<span class="t" style="top:680.96px;font-size:15.4px;color:#1c1c1c;left:55.00px;transform-origin:0 0;transform:scaleX(0.7138);-webkit-text-stroke:0.25px #f6f6f6;">Boni</span>
<span class="t" style="top:685.53px;font-size:14.5px;color:#383838;right:1488.00px;transform-origin:100% 0;transform:scaleX(0.7680);-webkit-text-stroke:0.2px #d3e8fd;">391,4</span>
<span class="t" style="top:685.53px;font-size:14.5px;color:#383838;right:1356.70px;transform-origin:100% 0;transform:scaleX(0.7680);-webkit-text-stroke:0.2px #d3e8fd;">1,9</span>
<span class="t" style="top:685.53px;font-size:14.5px;color:#383838;right:1217.70px;transform-origin:100% 0;transform:scaleX(0.7680);-webkit-text-stroke:0.2px #e2f9df;">356,7</span>
<span class="t" style="top:685.53px;font-size:14.5px;color:#383838;right:1086.70px;transform-origin:100% 0;transform:scaleX(0.7680);-webkit-text-stroke:0.2px #e2f9df;">1,8</span>
<span class="t" style="top:685.53px;font-size:14.5px;color:#383838;right:947.70px;transform-origin:100% 0;transform:scaleX(0.7680);-webkit-text-stroke:0.2px #f6f6f6;">356,7</span>
<span class="t" style="top:685.53px;font-size:14.5px;color:#383838;right:815.70px;transform-origin:100% 0;transform:scaleX(0.7680);-webkit-text-stroke:0.2px #f6f6f6;">1,8</span>
<span class="t" style="top:685.53px;font-size:14.5px;color:#383838;right:680.00px;transform-origin:100% 0;transform:scaleX(0.7680);-webkit-text-stroke:0.2px #fdf6cf;">2,3</span>
<span class="t" style="top:685.53px;font-size:14.5px;color:#383838;right:540.00px;transform-origin:100% 0;transform:scaleX(0.7680);-webkit-text-stroke:0.2px #fff;">34,7</span>
<span class="t" style="top:685.53px;font-size:14.5px;color:#383838;right:402.70px;transform-origin:100% 0;transform:scaleX(0.7680);-webkit-text-stroke:0.2px #fff;">109,7</span>
<span class="t" style="top:685.53px;font-size:14.5px;color:#383838;right:267.60px;transform-origin:100% 0;transform:scaleX(0.7680);-webkit-text-stroke:0.2px #fff;">34,7</span>
<span class="t" style="top:685.53px;font-size:14.5px;color:#383838;right:130.60px;transform-origin:100% 0;transform:scaleX(0.7680);-webkit-text-stroke:0.2px #fff;">109,7</span>
<svg class="b" style="left:35px;top:724px" width="17" height="17" viewBox="0 0 17 17"><rect x="1" y="1.6" width="15" height="15" rx="2.5" fill="#b9b9c9"/><rect x="0.75" y="0.75" width="14.5" height="14.5" rx="2.5" fill="url(#g1)" stroke="#4c5fd0" stroke-width="1.3"/><path d="M3.6 8h8.8M8 3.6v8.8" stroke="#1b2ea6" stroke-width="2.2"/></svg>
<span class="t" style="top:722.96px;font-size:15.4px;color:#1c1c1c;left:55.00px;transform-origin:0 0;transform:scaleX(0.6594);-webkit-text-stroke:0.25px #f6f6f6;">Zuschüsse</span>
<span class="t" style="top:727.53px;font-size:14.5px;color:#383838;right:1488.00px;transform-origin:100% 0;transform:scaleX(0.7680);-webkit-text-stroke:0.2px #d3e8fd;">1.190,7</span>
<span class="t" style="top:727.53px;font-size:14.5px;color:#383838;right:1356.70px;transform-origin:100% 0;transform:scaleX(0.7680);-webkit-text-stroke:0.2px #d3e8fd;">5,8</span>
<span class="t" style="top:727.53px;font-size:14.5px;color:#383838;right:1217.70px;transform-origin:100% 0;transform:scaleX(0.7680);-webkit-text-stroke:0.2px #e2f9df;">933,1</span>
<span class="t" style="top:727.53px;font-size:14.5px;color:#383838;right:1086.70px;transform-origin:100% 0;transform:scaleX(0.7680);-webkit-text-stroke:0.2px #e2f9df;">4,8</span>
<span class="t" style="top:727.53px;font-size:14.5px;color:#383838;right:947.70px;transform-origin:100% 0;transform:scaleX(0.7680);-webkit-text-stroke:0.2px #f6f6f6;">933,1</span>
<span class="t" style="top:727.53px;font-size:14.5px;color:#383838;right:815.70px;transform-origin:100% 0;transform:scaleX(0.7680);-webkit-text-stroke:0.2px #f6f6f6;">4,8</span>
<span class="t" style="top:727.53px;font-size:14.5px;color:#383838;right:680.00px;transform-origin:100% 0;transform:scaleX(0.7680);-webkit-text-stroke:0.2px #fdf6cf;">2,6</span>
<span class="t" style="top:727.53px;font-size:14.5px;color:#383838;right:540.00px;transform-origin:100% 0;transform:scaleX(0.7680);-webkit-text-stroke:0.2px #fff;">257,7</span>
<span class="t" style="top:727.53px;font-size:14.5px;color:#383838;right:402.70px;transform-origin:100% 0;transform:scaleX(0.7680);-webkit-text-stroke:0.2px #fff;">127,6</span>
<span class="t" style="top:727.53px;font-size:14.5px;color:#383838;right:267.60px;transform-origin:100% 0;transform:scaleX(0.7680);-webkit-text-stroke:0.2px #fff;">257,7</span>
<span class="t" style="top:727.53px;font-size:14.5px;color:#383838;right:130.60px;transform-origin:100% 0;transform:scaleX(0.7680);-webkit-text-stroke:0.2px #fff;">127,6</span>
<svg class="b" style="left:35px;top:766px" width="17" height="17" viewBox="0 0 17 17"><rect x="1" y="1.6" width="15" height="15" rx="2.5" fill="#b9b9c9"/><rect x="0.75" y="0.75" width="14.5" height="14.5" rx="2.5" fill="url(#g1)" stroke="#4c5fd0" stroke-width="1.3"/><path d="M3.6 8h8.8M8 3.6v8.8" stroke="#1b2ea6" stroke-width="2.2"/></svg>
<span class="t" style="top:764.96px;font-size:15.4px;color:#1c1c1c;left:55.00px;transform-origin:0 0;transform:scaleX(0.7226);-webkit-text-stroke:0.25px #f6f6f6;">Verkaufshilfen</span>
<span class="t" style="top:769.53px;font-size:14.5px;color:#383838;right:1488.00px;transform-origin:100% 0;transform:scaleX(0.7680);-webkit-text-stroke:0.2px #d3e8fd;">800,3</span>
<span class="t" style="top:769.53px;font-size:14.5px;color:#383838;right:1356.70px;transform-origin:100% 0;transform:scaleX(0.7680);-webkit-text-stroke:0.2px #d3e8fd;">3,9</span>
<span class="t" style="top:769.53px;font-size:14.5px;color:#383838;right:1217.70px;transform-origin:100% 0;transform:scaleX(0.7680);-webkit-text-stroke:0.2px #e2f9df;">700,4</span>
<span class="t" style="top:769.53px;font-size:14.5px;color:#383838;right:1086.70px;transform-origin:100% 0;transform:scaleX(0.7680);-webkit-text-stroke:0.2px #e2f9df;">3,6</span>
<span class="t" style="top:769.53px;font-size:14.5px;color:#383838;right:947.70px;transform-origin:100% 0;transform:scaleX(0.7680);-webkit-text-stroke:0.2px #f6f6f6;">700,4</span>
<span class="t" style="top:769.53px;font-size:14.5px;color:#383838;right:815.70px;transform-origin:100% 0;transform:scaleX(0.7680);-webkit-text-stroke:0.2px #f6f6f6;">3,6</span>
<span class="t" style="top:769.53px;font-size:14.5px;color:#383838;right:680.00px;transform-origin:100% 0;transform:scaleX(0.7680);-webkit-text-stroke:0.2px #fdf6cf;">3,1</span>
<span class="t" style="top:769.53px;font-size:14.5px;color:#383838;right:540.00px;transform-origin:100% 0;transform:scaleX(0.7680);-webkit-text-stroke:0.2px #fff;">100,0</span>
<span class="t" style="top:769.53px;font-size:14.5px;color:#383838;right:402.70px;transform-origin:100% 0;transform:scaleX(0.7680);-webkit-text-stroke:0.2px #fff;">114,3</span>
<span class="t" style="top:769.53px;font-size:14.5px;color:#383838;right:267.60px;transform-origin:100% 0;transform:scaleX(0.7680);-webkit-text-stroke:0.2px #fff;">100,0</span>
<span class="t" style="top:769.53px;font-size:14.5px;color:#383838;right:130.60px;transform-origin:100% 0;transform:scaleX(0.7680);-webkit-text-stroke:0.2px #fff;">114,3</span>
<svg class="b" style="left:35px;top:808px" width="17" height="17" viewBox="0 0 17 17"><rect x="1" y="1.6" width="15" height="15" rx="2.5" fill="#b9b9c9"/><rect x="0.75" y="0.75" width="14.5" height="14.5" rx="2.5" fill="url(#g1)" stroke="#4c5fd0" stroke-width="1.3"/><path d="M3.6 8h8.8M8 3.6v8.8" stroke="#1b2ea6" stroke-width="2.2"/></svg>
<span class="t" style="top:806.96px;font-size:15.4px;color:#1c1c1c;left:55.00px;transform-origin:0 0;transform:scaleX(0.6870);-webkit-text-stroke:0.25px #f6f6f6;">Sonstige Erlöse</span>
<span class="t" style="top:811.53px;font-size:14.5px;color:#383838;right:1488.00px;transform-origin:100% 0;transform:scaleX(0.7680);-webkit-text-stroke:0.2px #d3e8fd;">576,9</span>
<span class="t" style="top:811.53px;font-size:14.5px;color:#383838;right:1356.70px;transform-origin:100% 0;transform:scaleX(0.7680);-webkit-text-stroke:0.2px #d3e8fd;">2,8</span>
<span class="t" style="top:811.53px;font-size:14.5px;color:#383838;right:1217.70px;transform-origin:100% 0;transform:scaleX(0.7680);-webkit-text-stroke:0.2px #e2f9df;">507,1</span>
<span class="t" style="top:811.53px;font-size:14.5px;color:#383838;right:1086.70px;transform-origin:100% 0;transform:scaleX(0.7680);-webkit-text-stroke:0.2px #e2f9df;">2,6</span>
<span class="t" style="top:811.53px;font-size:14.5px;color:#383838;right:947.70px;transform-origin:100% 0;transform:scaleX(0.7680);-webkit-text-stroke:0.2px #f6f6f6;">507,1</span>
<span class="t" style="top:811.53px;font-size:14.5px;color:#383838;right:815.70px;transform-origin:100% 0;transform:scaleX(0.7680);-webkit-text-stroke:0.2px #f6f6f6;">2,6</span>
<span class="t" style="top:811.53px;font-size:14.5px;color:#383838;right:680.00px;transform-origin:100% 0;transform:scaleX(0.7680);-webkit-text-stroke:0.2px #fdf6cf;">1,8</span>
<span class="t" style="top:811.53px;font-size:14.5px;color:#383838;right:540.00px;transform-origin:100% 0;transform:scaleX(0.7680);-webkit-text-stroke:0.2px #fff;">69,8</span>
<span class="t" style="top:811.53px;font-size:14.5px;color:#383838;right:402.70px;transform-origin:100% 0;transform:scaleX(0.7680);-webkit-text-stroke:0.2px #fff;">113,8</span>
<span class="t" style="top:811.53px;font-size:14.5px;color:#383838;right:267.60px;transform-origin:100% 0;transform:scaleX(0.7680);-webkit-text-stroke:0.2px #fff;">69,8</span>
<span class="t" style="top:811.53px;font-size:14.5px;color:#383838;right:130.60px;transform-origin:100% 0;transform:scaleX(0.7680);-webkit-text-stroke:0.2px #fff;">113,8</span>
<svg class="b" style="left:35px;top:850px" width="17" height="17" viewBox="0 0 17 17"><rect x="1" y="1.6" width="15" height="15" rx="2.5" fill="#b9b9c9"/><rect x="0.75" y="0.75" width="14.5" height="14.5" rx="2.5" fill="url(#g1)" stroke="#4c5fd0" stroke-width="1.3"/><path d="M3.6 8h8.8M8 3.6v8.8" stroke="#1b2ea6" stroke-width="2.2"/></svg>
<span class="t" style="top:848.96px;font-size:15.4px;color:#1c1c1c;left:55.00px;transform-origin:0 0;transform:scaleX(0.6679);-webkit-text-stroke:0.25px #f6f6f6;">Sonstige VAK</span>
<span class="t" style="top:853.53px;font-size:14.5px;color:#383838;right:1488.00px;transform-origin:100% 0;transform:scaleX(0.7680);-webkit-text-stroke:0.2px #d3e8fd;">-353,9</span>
<span class="t" style="top:853.53px;font-size:14.5px;color:#383838;right:1356.70px;transform-origin:100% 0;transform:scaleX(0.7680);-webkit-text-stroke:0.2px #d3e8fd;">-1,7</span>
<span class="t" style="top:853.53px;font-size:14.5px;color:#383838;right:1217.70px;transform-origin:100% 0;transform:scaleX(0.7680);-webkit-text-stroke:0.2px #e2f9df;">-289,1</span>
<span class="t" style="top:853.53px;font-size:14.5px;color:#383838;right:1086.70px;transform-origin:100% 0;transform:scaleX(0.7680);-webkit-text-stroke:0.2px #e2f9df;">-1,5</span>
<span class="t" style="top:853.53px;font-size:14.5px;color:#383838;right:947.70px;transform-origin:100% 0;transform:scaleX(0.7680);-webkit-text-stroke:0.2px #f6f6f6;">-289,1</span>
<span class="t" style="top:853.53px;font-size:14.5px;color:#383838;right:815.70px;transform-origin:100% 0;transform:scaleX(0.7680);-webkit-text-stroke:0.2px #f6f6f6;">-1,5</span>
<span class="t" style="top:853.53px;font-size:14.5px;color:#383838;right:680.00px;transform-origin:100% 0;transform:scaleX(0.7680);-webkit-text-stroke:0.2px #fdf6cf;">-1,0</span>
<span class="t" style="top:853.53px;font-size:14.5px;color:#383838;right:540.00px;transform-origin:100% 0;transform:scaleX(0.7680);-webkit-text-stroke:0.2px #fff;">-64,7</span>
<span class="t" style="top:853.53px;font-size:14.5px;color:#383838;right:402.70px;transform-origin:100% 0;transform:scaleX(0.7680);-webkit-text-stroke:0.2px #fff;">122,4</span>
<span class="t" style="top:853.53px;font-size:14.5px;color:#383838;right:267.60px;transform-origin:100% 0;transform:scaleX(0.7680);-webkit-text-stroke:0.2px #fff;">-64,7</span>
<span class="t" style="top:853.53px;font-size:14.5px;color:#383838;right:130.60px;transform-origin:100% 0;transform:scaleX(0.7680);-webkit-text-stroke:0.2px #fff;">122,4</span>
<div class="b" style="left:1482px;top:174px;width:331px;height:381px;background:#fff;"></div>
<span class="t" style="top:183.40px;font-size:21.5px;color:#0a1f52;left:1494.00px;transform-origin:0 0;transform:scaleX(0.6940);-webkit-text-stroke:0.3px #fff;">Auswahl Benchmark</span>
<span class="t" style="top:212.40px;font-size:21.5px;color:#0a1f52;left:1494.00px;transform-origin:0 0;transform:scaleX(0.7024);-webkit-text-stroke:0.3px #fff;">2020 - Durchschnittsbenchmark</span>
<span class="t" style="top:241.40px;font-size:21.5px;color:#0a1f52;left:1494.00px;transform-origin:0 0;transform:scaleX(0.6671);-webkit-text-stroke:0.3px #fff;">2020 - TOP 10</span>
<span class="t" style="top:270.40px;font-size:21.5px;color:#0a1f52;left:1494.00px;transform-origin:0 0;transform:scaleX(0.6725);-webkit-text-stroke:0.3px #fff;">2020 - BOTTOM 10</span>
<span class="t" style="top:299.40px;font-size:21.5px;color:#0a1f52;left:1494.00px;transform-origin:0 0;transform:scaleX(0.7027);-webkit-text-stroke:0.3px #fff;">2019 - Durchschnittsbenchmark</span>
<span class="t" style="top:328.40px;font-size:21.5px;color:#0a1f52;left:1494.00px;transform-origin:0 0;transform:scaleX(0.6700);-webkit-text-stroke:0.3px #fff;">2019 - TOP 10</span>
<span class="t" style="top:357.40px;font-size:21.5px;color:#0a1f52;left:1494.00px;transform-origin:0 0;transform:scaleX(0.6725);-webkit-text-stroke:0.3px #fff;">2019 - BOTTOM 10</span>
<div class="b" style="left:1482px;top:381px;width:331px;height:29px;background:#cdcdcd;"></div>
<span class="t" style="top:386.40px;font-size:21.5px;color:#111;font-weight:700;left:1494.00px;transform-origin:0 0;transform:scaleX(0.6675);-webkit-text-stroke:0.3px #cdcdcd;">09/2020 - Durchschnittsbenchmark</span>
<span class="t" style="top:415.40px;font-size:21.5px;color:#0a1f52;left:1494.00px;transform-origin:0 0;transform:scaleX(0.6934);-webkit-text-stroke:0.3px #fff;">09/2020 - TOP 10</span>
<span class="t" style="top:444.40px;font-size:21.5px;color:#0a1f52;left:1494.00px;transform-origin:0 0;transform:scaleX(0.6918);-webkit-text-stroke:0.3px #fff;">09/2020 - BOTTOM 10</span>
<span class="t" style="top:473.40px;font-size:21.5px;color:#0a1f52;left:1494.00px;transform-origin:0 0;transform:scaleX(0.7129);-webkit-text-stroke:0.3px #fff;">03/2021 - Durchschnittsbenchmark</span>
<span class="t" style="top:502.40px;font-size:21.5px;color:#0a1f52;left:1494.00px;transform-origin:0 0;transform:scaleX(0.6934);-webkit-text-stroke:0.3px #fff;">03/2021 - TOP 10</span>
<span class="t" style="top:531.40px;font-size:21.5px;color:#0a1f52;left:1494.00px;transform-origin:0 0;transform:scaleX(0.6910);-webkit-text-stroke:0.3px #fff;">03/2021- BOTTOM 10</span>
<div class="b" style="left:1795px;top:555px;width:17px;height:326px;background:#f1f1f1;"></div>
<div class="b" style="left:1799.7px;top:869.8px;width:0;height:0;border-left:3.9px solid transparent;border-right:3.9px solid transparent;border-top:4.5px solid #505050"></div>
<div class="b" style="left:1865px;top:541px;width:55px;height:55px;background:#012d62;border-radius:6px 0 0 6px;"></div>
<svg class="b" style="left:1878.5px;top:555.5px" width="27" height="27" viewBox="0 0 24 24"><path fill="#fff" d="M14 2H6c-1.1 0-1.99.9-1.99 2L4 20c0 1.1.89 2 1.99 2H18c1.1 0 2-.9 2-2V8l-6-6zm2 16H8v-2h8v2zm0-4H8v-2h8v2zm-3-5V3.5L18.5 9H13z"/></svg>
<div class="b" style="left:1865px;top:618px;width:55px;height:55px;background:#012d62;border-radius:6px 0 0 6px;"></div>
<svg class="b" style="left:1873px;top:633px" width="40" height="26" viewBox="0 0 40 26"><path d="M3.7 20.2 A16 16 0 0 1 6.23 11.57" fill="none" stroke="#fff" stroke-width="2.8" stroke-linecap="round"/><path d="M15.04 4.89 A16 16 0 0 1 35.7 20.2" fill="none" stroke="#fff" stroke-width="2.8" stroke-linecap="round"/><path d="M6.39 5.15 L8.01 3.66 L21.9 15.8 L17.5 20 Z" fill="#fff"/><circle cx="7.2" cy="4.4" r="1.1" fill="#fff"/><circle cx="19.7" cy="18" r="3.7" fill="#fff"/><circle cx="19.7" cy="18" r="1.3" fill="#012d62"/></svg>
<div class="b" style="left:1865px;top:695px;width:55px;height:55px;background:#012d62;border-radius:6px 0 0 6px;"></div>
<svg class="b" style="left:1878.5px;top:709.5px" width="27" height="27" viewBox="0 0 24 24"><path fill="#fff" d="M20 4H4c-1.1 0-1.99.9-1.99 2L2 18c0 1.1.9 2 2 2h16c1.1 0 2-.9 2-2V6c0-1.1-.9-2-2-2zm0 4l-8 5-8-5V6l8 5 8-5v2z"/></svg>
<div class="b" style="left:1865px;top:772px;width:55px;height:55px;background:#012d62;border-radius:6px 0 0 6px;"></div>
<svg class="b" style="left:1878.5px;top:786.5px" width="27" height="27" viewBox="0 0 24 24"><path fill="#fff" d="M6.62 10.79c1.44 2.83 3.76 5.14 6.59 6.59l2.2-2.2c.27-.27.67-.36 1.02-.24 1.12.37 2.33.57 3.57.57.55 0 1 .45 1 1V20c0 .55-.45 1-1 1-9.39 0-17-7.61-17-17 0-.55.45-1 1-1h3.5c.55 0 1 .45 1 1 0 1.25.2 2.45.57 3.57.11.35.03.74-.25 1.02l-2.2 2.2z"/></svg>
<div class="b" style="left:0px;top:893px;width:1920px;height:44px;background:#012d62;"></div>
<span class="t" style="top:908.62px;font-size:21.6px;color:#fff;left:768.60px;transform-origin:0 0;transform:scaleX(0.6925);-webkit-text-stroke:0.4px #012d62;">PlanAPP Version 1.4.1 © 2021 Copyright PlanAPP GmbH</span>
<div class="b" style="left:0px;top:0px;width:1920px;height:1px;background:#000;"></div>
<div class="b" style="left:0px;top:936px;width:1920px;height:1px;background:#000;"></div>
<div class="b" style="left:0px;top:0px;width:1px;height:937px;background:#000;"></div>
<div class="b" style="left:1919px;top:0px;width:1px;height:937px;background:#000;"></div>
</body></html>
